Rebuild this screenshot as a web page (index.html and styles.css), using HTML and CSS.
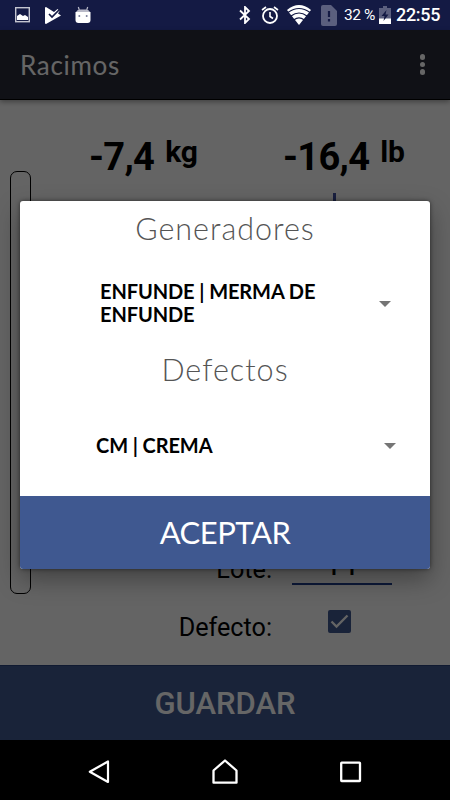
FILE: index.html
```html
<!DOCTYPE html>
<html lang="es">
<head>
    <meta charset="UTF-8">
    <meta name="viewport" content="width=device-width, initial-scale=1.0">
    <title>Racimos</title>
    <link rel="stylesheet" href="styles.css">
</head>
<body>
    <div class="phone">
        <div class="status">
            <div class="status-left">
                <svg width="16" height="16" viewBox="0 0 16 16"><rect x=".7" y=".7" width="13.6" height="14" fill="none" stroke="#c4c5d0" stroke-width="1.4"/><path d="M2 13V9l3-2 3 2 2-1 3 2v3z" fill="#fff"/></svg>
                <svg width="16" height="17" viewBox="0 0 16 17"><path d="M1 0L9 5 12.500 2 14.500 4 13 6.500 16 8.500 1 17Q0 17 0 16V1Q0 0 1 0z" fill="#fff"/><path d="M4 7l3 3 7-7" fill="none" stroke="#141a44" stroke-width="1.700"/></svg>
                <svg width="16" height="18" viewBox="0 0 16 18"><path d="M3.300 1l1 3M12.700 1l-1 3" stroke="#b9bac8" stroke-width="1.200"/><path d="M1 6Q2 3.500 5 3.500h6Q14 3.500 15 6z" fill="#b9bac8"/><path d="M.5 6h15v8q0 3-3 3h-9q-3 0-3-3z" fill="#fff"/><circle cx="4.300" cy="10" r="1" fill="#777b98"/><circle cx="11.700" cy="10" r="1" fill="#777b98"/></svg>
            </div>
            <div class="status-right">
                <svg class="bt" width="12" height="18" viewBox="0 0 12 18"><path d="M1 4.500l9 8.500-4 4V1l4 4-9 8.500" fill="none" stroke="#fff" stroke-width="1.800"/></svg>
                <svg class="alarm" width="18" height="18" viewBox="0 0 18 18"><circle cx="9" cy="10" r="7" fill="none" stroke="#fff" stroke-width="1.800"/><path d="M9 6v4.500l3 2M1 4l4-3M17 4l-4-3" fill="none" stroke="#fff" stroke-width="1.600"/></svg>
                <svg class="wifi" width="24" height="20" viewBox="0 0 24 20"><path d="M12 20L0 5Q12-5 24 5z" fill="#fff"/><path d="M1 7.500q11-8 22 0M4 11q8-6 16 0M7 14.800q5-4 10 0" fill="none" stroke="#141a44" stroke-width="1.200"/></svg>
                <svg class="sim" width="16" height="21" viewBox="0 0 16 21"><path d="M2 0h8l6 6v13q0 2-2 2H2q-2 0-2-2V2q0-2 2-2z" fill="#5b5f7e"/><path d="M8 6v6M8 14v2.500" stroke="#141a44" stroke-width="2.200"/></svg>
                <span class="percent">32 %</span>
                <svg class="battery" width="12" height="18" viewBox="0 0 12 18"><path d="M4 0h4v2h4v16H0V2h4z" fill="#5b5f7e"/><path d="M0 12.500h12V18H0z" fill="#fff"/><path d="M7.500 4L2.500 10h3l-1 5 5-6.500h-3z" fill="#141a44"/></svg>
                <span class="clock">22:55</span>
            </div>
        </div>

        <div class="app">
            <div class="toolbar">
                <span class="toolbar-title">Racimos</span>
                <div class="menu"><i></i><i></i><i></i></div>
            </div>
            <div class="content">
                <div class="gauge"></div>
                <div class="main">
                    <div class="weights">
                        <div class="weight kilos"><span class="value">-7,4</span><span class="unit">kg</span></div>
                        <div class="weight pounds"><span class="value">-16,4</span><span class="unit">lb</span></div>
                    </div>
                    <div class="cursor"></div>
                    <div class="fields">
                        <div class="field">
                            <span class="label">Lote:</span>
                            <span class="input">11</span>
                        </div>
                        <div class="field">
                            <span class="label">Defecto:</span>
                            <svg class="check" width="23" height="23" viewBox="0 0 23 23"><rect width="23" height="23" rx="2" fill="#3f5890"/><path d="M3.500 11.500l5 5L19.500 5.500" fill="none" stroke="#fafafa" stroke-width="2.300"/></svg>
                        </div>
                    </div>
                </div>
            </div>
            <div class="save">GUARDAR</div>

            <div class="overlay">
                <div class="dialog">
                    <div class="dialog-title">Generadores</div>
                    <div class="spinner first">
                        <span class="option">ENFUNDE | MERMA DE<br>ENFUNDE</span>
                        <i class="arrow"></i>
                    </div>
                    <div class="dialog-title defectos">Defectos</div>
                    <div class="spinner second">
                        <span class="option">CM | CREMA</span>
                        <i class="arrow"></i>
                    </div>
                    <div class="accept">ACEPTAR</div>
                </div>
            </div>
        </div>

        <div class="navbar">
            <svg width="22" height="26" viewBox="0 0 22 26"><path d="M20 2.500v20.500L1.800 12.700z" fill="none" stroke="#fff" stroke-width="2.200" stroke-linejoin="round"/></svg>
            <svg width="26" height="26" viewBox="0 0 26 26"><path d="M1.500 23.700V11.500L13 1.500l11.500 10v12.200z" fill="none" stroke="#fff" stroke-width="2.300" stroke-linejoin="round"/></svg>
            <svg width="22" height="22" viewBox="0 0 22 22"><rect x="1.200" y="1.700" width="18.800" height="18.300" rx=".5" fill="none" stroke="#fff" stroke-width="2.300"/></svg>
        </div>
    </div>
</body>
</html>
```
FILE: styles.css
```css
*{
    box-sizing: border-box;
}
body{
    margin: 0;
    overflow: hidden;
    font-family: Roboto, sans-serif;
}
.phone{
    width: 450px;
    height: 800px;
    display: flex;
    flex-direction: column;
    background: #000;
}
svg{
    display: block;
    flex: none;
}

/* status bar */
.status{
    height: 30px;
    display: flex;
    justify-content: space-between;
    padding: 0 10px 0 15px;
    background: #141a44;
    color: #fff;
}
.status-left, .status-right{
    display: flex;
    align-items: center;
}
.status-left{
    gap: 14px;
}
.bt{
    margin-right: 10px;
}
.alarm{
    margin-right: 8px;
}
.wifi{
    margin-right: 10px;
}
.sim{
    margin-right: 7px;
}
.percent{
    width: 32px;
    font-size: 15.500px;
    letter-spacing: -.4px;
    white-space: nowrap;
    margin-right: 3px;
}
.battery{
    margin-right: 5px;
}
.clock{
    width: 44px;
    font-size: 18px;
    letter-spacing: -.3px;
    font-weight: 500;
    line-height: 32px;
}

/* app behind the dialog */
.app{
    position: relative;
    height: 710px;
    display: flex;
    flex-direction: column;
    background: #fafafa;
}
.toolbar{
    height: 70px;
    display: flex;
    justify-content: space-between;
    align-items: center;
    padding: 0 25px 0 20px;
    background: #282b37;
    border-bottom: 1px solid #000;
    box-shadow: 0 2px 5px rgba(0,0,0,.35);
    color: #fff;
}
.toolbar-title{
    font-family: Lato, sans-serif;
    font-size: 26px;
    letter-spacing: .7px;
}
.menu{
    display: flex;
    flex-direction: column;
    gap: 2px;
}
.menu i{
    width: 5.500px;
    height: 5.500px;
    border-radius: 50%;
    background: #fff;
}
.content{
    height: 565px;
    display: flex;
    padding-left: 10px;
}
.gauge{
    width: 21px;
    height: 423px;
    margin-top: 71px;
    border: 1px solid #000;
    border-radius: 7px;
}
.main{
    flex: 1;
    display: flex;
    flex-direction: column;
    padding-top: 34px;
}
.weights{
    display: flex;
    height: 59px;
    padding-left: 58px;
    font-weight: 700;
    color: #000;
}
.weight{
    display: flex;
    align-items: flex-start;
    gap: 11px;
}
.kilos{
    width: 194px;
}
.value{
    font-size: 38px;
    letter-spacing: -.7px;
    line-height: 47px;
}
.unit{
    font-size: 30px;
    letter-spacing: -.2px;
    line-height: 36px;
}
.cursor{
    width: 3px;
    height: 40px;
    margin-left: 302px;
    background: #3f4f9f;
}
.fields{
    margin-top: auto;
    padding-bottom: 9px;
}
.field{
    display: flex;
    height: 58px;
    align-items: center;
}
.label{
    width: 241px;
    text-align: right;
    font-size: 25.200px;
}
.input{
    width: 100px;
    margin-left: 20px;
    margin-bottom: 8px;
    border-bottom: 2px solid #1f3c8c;
    text-align: center;
    font-size: 32px;
    line-height: 38px;
}
.check{
    margin-left: 56px;
    margin-bottom: 11px;
}
.save{
    height: 75px;
    line-height: 75px;
    text-align: center;
    background: #3f5890;
    border-top: 1px solid #28437c;
    color: #fff;
    font-size: 31px;
    font-weight: 500;
}

/* dialog */
.overlay{
    position: absolute;
    inset: 0;
    padding: 171px 20px 0;
    background: rgba(0,0,0,.6);
}
.dialog{
    height: 368px;
    display: flex;
    flex-direction: column;
    overflow: hidden;
    background: #fff;
    border-radius: 3px;
    box-shadow: 0 10px 24px rgba(0,0,0,.35), 0 0 4px rgba(0,0,0,.5);
    font-family: Lato, sans-serif;
}
.dialog-title{
    height: 56px;
    line-height: 54px;
    text-align: center;
    color: #555;
    font-size: 30.500px;
    font-weight: 300;
    letter-spacing: 1px;
}
.defectos{
    height: 38px;
    line-height: 36px;
}
.spinner{
    display: flex;
    align-items: center;
    justify-content: space-between;
    color: #000;
    font-size: 20px;
    font-weight: 700;
    line-height: 23px;
    letter-spacing: -.1px;
}
.option{
    padding-bottom: 2px;
}
.first{
    height: 94px;
    padding: 0 39px 0 80px;
}
.second{
    height: 106px;
    padding: 8px 34px 0 76px;
}
.arrow{
    border: 6px solid transparent;
    border-top-color: #757575;
    border-bottom: 0;
}
.accept{
    height: 73px;
    margin-top: auto;
    line-height: 72px;
    text-align: center;
    background: #3f5890;
    color: #fff;
    font-size: 31px;
    letter-spacing: -.5px;
}

/* android buttons */
.navbar{
    height: 60px;
    display: flex;
    align-items: center;
    justify-content: space-between;
    padding: 4px 88px 0;
    background: #000;
}
```
